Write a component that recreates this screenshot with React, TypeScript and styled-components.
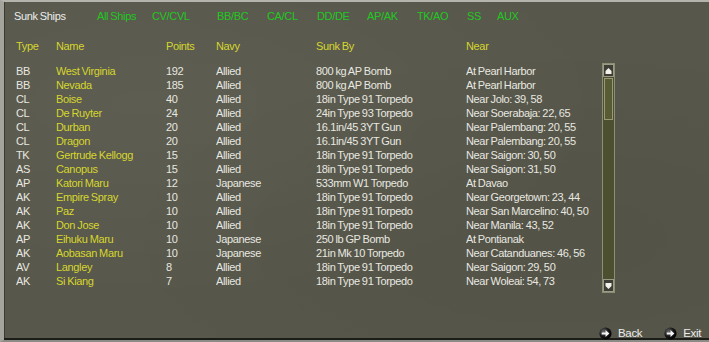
import styled, { createGlobalStyle } from "styled-components";

const GlobalStyle = createGlobalStyle`
  html, body {
    margin: 0;
    padding: 0;
    background: #1c1c18;
  }
  body {
    font-family: "Liberation Sans", Arial, sans-serif;
  }
`;

const Frame = styled.div`
  position: relative;
  box-sizing: border-box;
  width: 709px;
  height: 342px;
  display: flex;
  flex-direction: column;
  padding-left: 10px;
  border-left: 4px solid #a4a49c;
  border-top: 2px solid #b4b4ac;
  border-bottom: 2px solid #8c8c86;
  box-shadow: inset 0 -2px 0 #1c1c18, inset 1px 0 0 #3a3a32;
  background-color: #57574b;
  background-image:
    radial-gradient(ellipse at 20% 30%, rgba(255, 255, 240, 0.035), transparent 60%),
    radial-gradient(ellipse at 80% 70%, rgba(0, 0, 0, 0.05), transparent 60%);
  font-size: 11px;
  letter-spacing: -0.35px;
  word-spacing: -0.6px;
  color: #e8e8e0;
  overflow: hidden;
`;

const TabBar = styled.div`
  display: flex;
  align-items: center;
  height: 28px;
`;

const Tab = styled.div<{ $w: number; $title?: boolean }>`
  width: ${(p) => p.$w}px;
  flex: none;
  color: ${(p) => (p.$title ? "#ececec" : "#22c822")};
  white-space: nowrap;
  cursor: pointer;
`;

const Grid = styled.div`
  display: grid;
  grid-template-columns: 40px 110px 50px 100px 150px 136px;
  padding-left: 2px;
`;

const HeadRow = styled(Grid)`
  margin-top: 9px;
  height: 14px;
  line-height: 14px;
  color: #d6d62e;
`;

const ListArea = styled.div`
  display: flex;
  margin-top: 10px;
  height: 230px;
`;

const Rows = styled.div`
  padding-top: 1px;
`;

const Row = styled(Grid)`
  height: 14px;
  line-height: 14px;
  white-space: nowrap;
`;

const Cell = styled.div<{ $name?: boolean }>`
  color: ${(p) => (p.$name ? "#d6d62e" : "#e8e8e0")};
  overflow: hidden;
`;

const ScrollBar = styled.div`
  width: 13px;
  display: flex;
  flex-direction: column;
  box-sizing: border-box;
  border: 1px solid #8e8e74;
  background: #4c4f30;
`;

const ScrollButton = styled.div`
  height: 13px;
  box-sizing: border-box;
  background: #3e3e36;
  border: 1px solid #9c9c86;
  display: flex;
  align-items: center;
  justify-content: center;
`;

const Thumb = styled.div`
  height: 42px;
  margin: 1px 1px 0;
  box-sizing: border-box;
  border: 1px solid #9a9a78;
  background: #585c34;
`;

const Track = styled.div`
  flex: 1;
`;

const Footer = styled.div`
  margin-top: auto;
  display: flex;
  justify-content: flex-end;
  align-items: center;
  gap: 22px;
  height: 14px;
  padding-right: 8px;
  margin-bottom: 0px;
`;

const NavButton = styled.div`
  display: flex;
  align-items: center;
  gap: 6px;
  color: #ececec;
  font-size: 11.5px;
  cursor: pointer;
`;

const ArrowIcon = () => (
  <svg width="13" height="13" viewBox="0 0 12 12">
    <defs>
      <radialGradient id="ball" cx="35%" cy="35%" r="70%">
        <stop offset="0" stopColor="#6a6a6a" />
        <stop offset="0.6" stopColor="#151515" />
        <stop offset="1" stopColor="#000" />
      </radialGradient>
    </defs>
    <circle cx="6" cy="6" r="5.6" fill="url(#ball)" />
    <path d="M2.5 5 H6 V2.8 L9.6 6 L6 9.2 V7 H2.5 Z" fill="#f4f4f4" />
  </svg>
);

const UpGlyph = ({ down }: { down?: boolean }) => (
  <svg width="7" height="6" viewBox="0 0 7 6" style={down ? { transform: "rotate(180deg)" } : undefined}>
    <path d="M3.5 0 L6.5 3 H0.5 Z" fill="#f2f2ea" />
    <rect x="0.5" y="3" width="6" height="3" fill="#f2f2ea" />
  </svg>
);

const tabs: [string, number][] = [
  ["All Ships", 55],
  ["CV/CVL", 65],
  ["BB/BC", 50],
  ["CA/CL", 50],
  ["DD/DE", 50],
  ["AP/AK", 50],
  ["TK/AO", 50],
  ["SS", 30],
  ["AUX", 40],
];

const ships: string[][] = [
  ["BB", "West Virginia", "192", "Allied", "800 kg AP Bomb", "At Pearl Harbor"],
  ["BB", "Nevada", "185", "Allied", "800 kg AP Bomb", "At Pearl Harbor"],
  ["CL", "Boise", "40", "Allied", "18in Type 91 Torpedo", "Near Jolo: 39, 58"],
  ["CL", "De Ruyter", "24", "Allied", "24in Type 93 Torpedo", "Near Soerabaja: 22, 65"],
  ["CL", "Durban", "20", "Allied", "16.1in/45 3YT Gun", "Near Palembang: 20, 55"],
  ["CL", "Dragon", "20", "Allied", "16.1in/45 3YT Gun", "Near Palembang: 20, 55"],
  ["TK", "Gertrude Kellogg", "15", "Allied", "18in Type 91 Torpedo", "Near Saigon: 30, 50"],
  ["AS", "Canopus", "15", "Allied", "18in Type 91 Torpedo", "Near Saigon: 31, 50"],
  ["AP", "Katori Maru", "12", "Japanese", "533mm W1 Torpedo", "At Davao"],
  ["AK", "Empire Spray", "10", "Allied", "18in Type 91 Torpedo", "Near Georgetown: 23, 44"],
  ["AK", "Paz", "10", "Allied", "18in Type 91 Torpedo", "Near San Marcelino: 40, 50"],
  ["AK", "Don Jose", "10", "Allied", "18in Type 91 Torpedo", "Near Manila: 43, 52"],
  ["AP", "Eihuku Maru", "10", "Japanese", "250 lb GP Bomb", "At Pontianak"],
  ["AK", "Aobasan Maru", "10", "Japanese", "21in Mk 10 Torpedo", "Near Catanduanes: 46, 56"],
  ["AV", "Langley", "8", "Allied", "18in Type 91 Torpedo", "Near Saigon: 29, 50"],
  ["AK", "Si Kiang", "7", "Allied", "18in Type 91 Torpedo", "Near Woleai: 54, 73"],
];

export default function App() {
  return (
    <>
      <GlobalStyle />
      <Frame>
        <TabBar>
          <Tab $w={83} $title>
            Sunk Ships
          </Tab>
          {tabs.map(([label, w]) => (
            <Tab key={label} $w={w}>
              {label}
            </Tab>
          ))}
        </TabBar>
        <HeadRow>
          <div>Type</div>
          <div>Name</div>
          <div>Points</div>
          <div>Navy</div>
          <div>Sunk By</div>
          <div>Near</div>
        </HeadRow>
        <ListArea>
          <Rows>
            {ships.map((s, i) => (
              <Row key={i}>
                <Cell>{s[0]}</Cell>
                <Cell $name>{s[1]}</Cell>
                <Cell>{s[2]}</Cell>
                <Cell>{s[3]}</Cell>
                <Cell>{s[4]}</Cell>
                <Cell>{s[5]}</Cell>
              </Row>
            ))}
          </Rows>
          <ScrollBar>
            <ScrollButton>
              <UpGlyph />
            </ScrollButton>
            <Thumb />
            <Track />
            <ScrollButton>
              <UpGlyph down />
            </ScrollButton>
          </ScrollBar>
        </ListArea>
        <Footer>
          <NavButton>
            <ArrowIcon />
            Back
          </NavButton>
          <NavButton>
            <ArrowIcon />
            Exit
          </NavButton>
        </Footer>
      </Frame>
    </>
  );
}
